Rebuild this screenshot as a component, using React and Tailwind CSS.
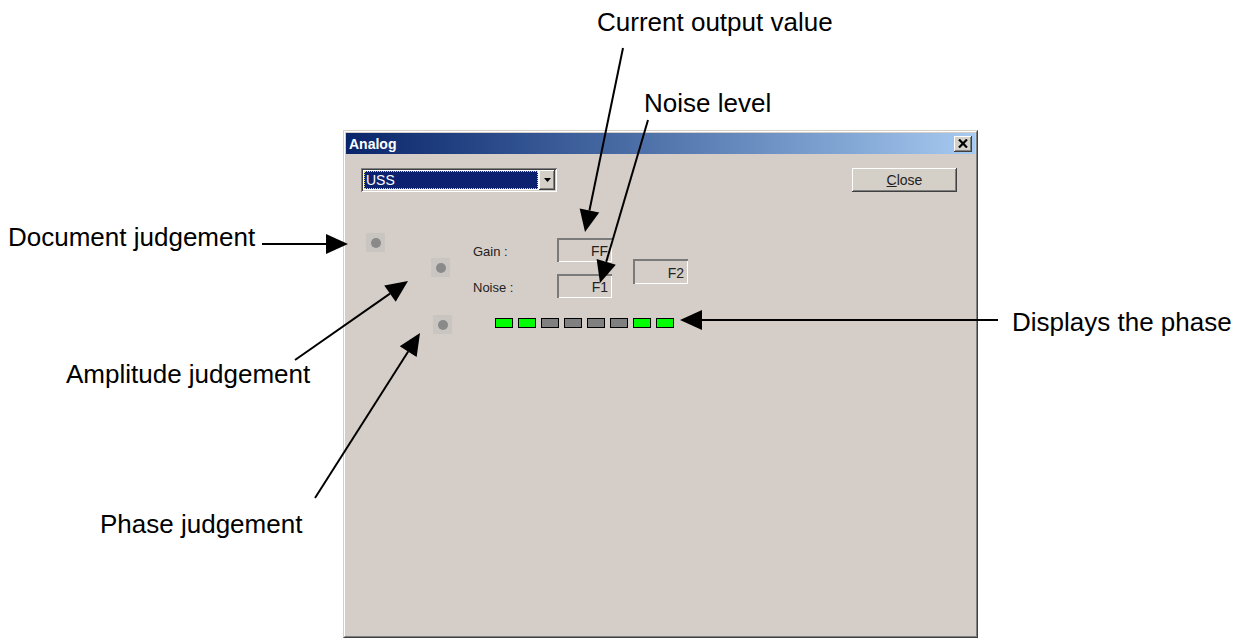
import React from "react"

// callout arrows: line + filled head, page coordinates
const arrows = [
  { from: [623, 48], to: [585, 232] },
  { from: [648, 120], to: [600, 283] },
  { from: [262, 244], to: [348, 244] },
  { from: [295, 360], to: [408, 281] },
  { from: [315, 498], to: [420, 333] },
  { from: [998, 320], to: [680, 320] },
]

const phases = [true, true, false, false, false, false, true, true]

const raised =
  "shadow-[inset_-1px_-1px_#404040,inset_1px_1px_#ffffff,inset_-2px_-2px_#808080,inset_2px_2px_#d4d0c8]"
const sunken =
  "shadow-[inset_1px_1px_#808080,inset_-1px_-1px_#ffffff,inset_2px_2px_#404040,inset_-2px_-2px_#d4d0c8]"

function Arrow({ from, to, len = 22, half = 10 }) {
  const dx = to[0] - from[0]
  const dy = to[1] - from[1]
  const d = Math.hypot(dx, dy)
  const ux = dx / d
  const uy = dy / d
  const bx = to[0] - ux * len
  const by = to[1] - uy * len
  const px = -uy * half
  const py = ux * half
  return (
    <g>
      <line x1={from[0]} y1={from[1]} x2={bx} y2={by} stroke="#000" strokeWidth="2" />
      <polygon
        points={`${to[0]},${to[1]} ${bx + px},${by + py} ${bx - px},${by - py}`}
        fill="#000"
      />
    </g>
  )
}

function Callout({ className, children }) {
  return (
    <span className={"absolute whitespace-nowrap text-[26px] leading-[26px] text-black " + className}>
      {children}
    </span>
  )
}

function Led({ className = "" }) {
  return (
    <div className={"w-[19px] h-[19px] bg-[#c9c5c1] flex items-center justify-center shrink-0 " + className}>
      <div className="w-[10px] h-[10px] rounded-full bg-[#8a8a8a]" />
    </div>
  )
}

function ValueBox({ className = "", children }) {
  return (
    <div
      className={
        "h-[24px] w-[55px] flex items-center justify-end pr-[4px] pt-[2px] text-[14px] leading-none text-[#222] shadow-[inset_2px_2px_#7a7a7a,inset_-1px_-1px_#ffffff] " +
        className
      }
    >
      {children}
    </div>
  )
}

export default function App() {
  return (
    <div className="relative w-[1239px] h-[639px] overflow-hidden bg-white font-['Liberation_Sans',Arial,sans-serif]">
      <div className="pl-[343px] pt-[130px]">
        {/* dialog window */}
        <div className="w-[635px] h-[508px] border border-t-[#d4d0c8] border-l-[#d4d0c8] border-r-[#404040] border-b-[#404040]">
          <div className="h-full flex flex-col p-px bg-[#d5cec8] border border-t-white border-l-white border-r-[#808080] border-b-[#808080]">
            <div className="h-[21px] flex items-center justify-between pl-[3px] pr-[3px] bg-linear-to-r from-[#0a246a] to-[#a6caf0]">
              <span className="text-white font-bold text-[14px] leading-none">Analog</span>
              <div className={"w-[18px] h-[16px] bg-[#d4d0c8] flex items-center justify-center " + raised}>
                <svg width="10" height="9" viewBox="0 0 10 9">
                  <path d="M1 0.5 L9 8.5 M9 0.5 L1 8.5" stroke="#000" strokeWidth="2.2" />
                </svg>
              </div>
            </div>

            <div className="flex-1 flex flex-col text-[13px] text-[#222]">
              <div className="flex items-start justify-between pt-[14px] pl-[15px] pr-[18px]">
                <div className={"w-[196px] h-[24px] bg-white flex p-[2px] " + sunken}>
                  <div className="flex-1 m-px bg-[#0c216f] outline-1 outline-dotted outline-[#e8e070] -outline-offset-1 flex items-center pl-[2px]">
                    <span className="text-white text-[14px] leading-none">USS</span>
                  </div>
                  <div className={"w-[16px] bg-[#d4d0c8] flex items-center justify-center " + raised}>
                    <svg width="7" height="4" viewBox="0 0 7 4">
                      <path d="M0 0 H7 L3.5 4 Z" fill="#000" />
                    </svg>
                  </div>
                </div>
                <button className={"w-[105px] h-[24px] bg-[#d4d0c8] flex items-center justify-center text-[14px] leading-none " + raised}>
                  <span>
                    <span className="underline">C</span>lose
                  </span>
                </button>
              </div>

              <div className="flex pl-[20px] mt-[41px]">
                <Led />
                <div className="ml-[46px] flex flex-col">
                  <div className="flex items-start">
                    <Led className="mt-[25px]" />
                    <div className="ml-[23px] mt-[5px] grid grid-cols-[84px_55px] grid-rows-[24px_24px] gap-y-[12px] items-center">
                      <span className="leading-none pt-[3px]">Gain :</span>
                      <ValueBox>FF</ValueBox>
                      <span className="leading-none pt-[3px]">Noise :</span>
                      <ValueBox>F1</ValueBox>
                    </div>
                    <ValueBox className="ml-[21px] mt-[26px] h-[25px]">F2</ValueBox>
                  </div>
                  <div className="flex items-start mt-[17px]">
                    <Led className="ml-[2px]" />
                    <div className="ml-[43px] mt-[3px] flex gap-[5px]">
                      {phases.map((on, i) => (
                        <div
                          key={i}
                          className={
                            "w-[18px] h-[10px] border border-black " +
                            (on ? "bg-[#00ff00]" : "bg-[#808080]")
                          }
                        />
                      ))}
                    </div>
                  </div>
                </div>
              </div>
            </div>
          </div>
        </div>
      </div>

      {/* annotations */}
      <svg className="absolute inset-0 pointer-events-none" width="1239" height="639">
        {arrows.map((a, i) => (
          <Arrow key={i} from={a.from} to={a.to} />
        ))}
      </svg>
      <Callout className="left-[597px] top-[9px]">Current output value</Callout>
      <Callout className="left-[644px] top-[90px]">Noise level</Callout>
      <Callout className="left-[8px] top-[224px]">Document judgement</Callout>
      <Callout className="left-[66px] top-[361px]">Amplitude judgement</Callout>
      <Callout className="left-[100px] top-[511px]">Phase judgement</Callout>
      <Callout className="left-[1012px] top-[309px]">Displays the phase</Callout>
    </div>
  )
}
